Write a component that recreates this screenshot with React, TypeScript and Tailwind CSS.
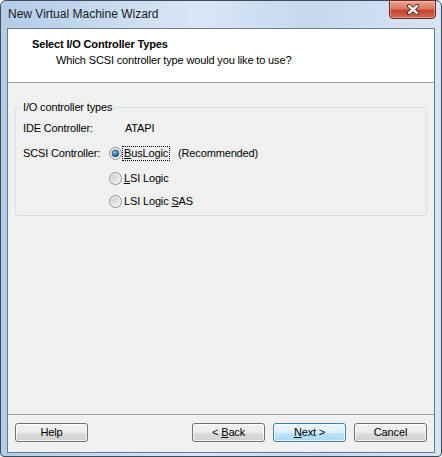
import type { ReactNode } from 'react';

function Radio({ checked }: { checked?: boolean }) {
  return (
    <svg width="13" height="13" viewBox="0 0 13 13" className="shrink-0" aria-hidden="true">
      <defs>
        <linearGradient id="radio-in" x1="0" y1="0" x2="1" y2="1">
          <stop offset="0" stopColor="#c9c9c9" />
          <stop offset="1" stopColor="#f7f7f7" />
        </linearGradient>
        <radialGradient id="radio-dot" cx="0.4" cy="0.35" r="0.7">
          <stop offset="0" stopColor="#9fd3f5" />
          <stop offset="0.45" stopColor="#3b88c4" />
          <stop offset="1" stopColor="#14476f" />
        </radialGradient>
      </defs>
      <circle cx="6.5" cy="6.5" r="6" fill="#f4f4f4" stroke="#8b8b8b" />
      <circle cx="6.5" cy="6.5" r="4.6" fill="url(#radio-in)" />
      {checked && <circle cx="6.5" cy="6.5" r="3.4" fill="url(#radio-dot)" stroke="#1d4f78" strokeWidth="0.6" />}
    </svg>
  );
}

function RadioOption({ checked, focused, children }: { checked?: boolean; focused?: boolean; children: ReactNode }) {
  return (
    <div className="flex items-center">
      <Radio checked={checked} />
      <span
        className={`px-[1px] leading-[13px] border ${focused ? 'border-dotted border-black' : 'border-transparent'}`}
      >
        {children}
      </span>
    </div>
  );
}

function Button({ children, primary }: { children: ReactNode; primary?: boolean }) {
  return (
    <button
      type="button"
      className={`flex h-[19px] w-[73px] items-center justify-center rounded-[3px] border text-[11px] leading-[13px] text-black shadow-[inset_0_0_0_1px_rgba(255,255,255,0.8)] ${
        primary
          ? 'border-[#3c7fb1] bg-[linear-gradient(#eaf6fd_0%,#d9f0fc_50%,#bee6fd_50%,#a7d9f5_100%)]'
          : 'border-[#707070] bg-[linear-gradient(#f2f2f2_0%,#ebebeb_50%,#dddddd_50%,#cfcfcf_100%)]'
      }`}
    >
      {children}
    </button>
  );
}

export default function App() {
  return (
    <div className="flex h-[457px] w-[442px] flex-col rounded-t-[6px] rounded-b-[4px] border border-[#3f4b57] bg-[linear-gradient(90deg,#b3cce8_0%,#c8dbf0_25%,#d9e7f6_45%,#c4d8ee_70%,#d6e5f5_100%)] font-['Liberation_Sans',Arial,sans-serif] text-black">
      <div className="flex h-[27px] shrink-0 items-start justify-between">
        <div className="pl-[7px] pt-[6px] text-[12px] leading-[15px] text-[#1b1b1b]">New Virtual Machine Wizard</div>
        <div className="mr-[5px] -mt-px flex h-[19px] w-[47px] items-center justify-center rounded-b-[4px] border border-[#6a2a1f] bg-[linear-gradient(#eaa698_0%,#d9785f_45%,#c4452c_55%,#d46a4f_100%)] shadow-[inset_0_0_0_1px_rgba(255,210,200,0.45)]">
          <svg width="14" height="11" viewBox="0 0 14 11" aria-hidden="true">
            <path d="M3 2 L11 9 M11 2 L3 9" stroke="#4a1e16" strokeWidth="4.2" strokeLinecap="round" />
            <path d="M3 2 L11 9 M11 2 L3 9" stroke="#ffffff" strokeWidth="2.4" strokeLinecap="round" />
          </svg>
        </div>
      </div>

      <div className="mx-[6px] mb-[3px] flex flex-1 flex-col border border-[#6b7a89] bg-[#f0f0f0] text-[11px] leading-[13px] tracking-[-0.15px]">
        <div className="h-[54px] shrink-0 border-b border-[#a0a0a0] bg-white">
          <div className="pl-[24px] pt-[9px] font-bold">Select I/O Controller Types</div>
          <div className="mt-[3px] pl-[48px]">Which SCSI controller type would you like to use?</div>
        </div>

        <div className="flex-1">
          <fieldset className="mx-[7px] mt-[18px] rounded-[3px] border border-[#d5dfe5] px-[7px] pt-[7px] pb-[6px]">
            <legend className="-ml-[1px] px-[1px] leading-[13px]">I/O controller types</legend>
            <div className="flex h-[15px] items-center">
              <span className="w-[86px]">IDE Controller:</span>
              <span className="pl-[16px]">ATAPI</span>
            </div>
            <div className="mt-[10px] flex h-[15px] items-center">
              <span className="w-[86px]">SCSI Controller:</span>
              <RadioOption checked focused>
                <span className="underline">B</span>usLogic
              </RadioOption>
              <span className="ml-[8px]">(Recommended)</span>
            </div>
            <div className="mt-[10px] flex h-[15px] items-center pl-[86px]">
              <RadioOption>
                <span className="underline">L</span>SI Logic
              </RadioOption>
            </div>
            <div className="mt-[8px] flex h-[15px] items-center pl-[86px]">
              <RadioOption>
                LSI Logic <span className="underline">S</span>AS
              </RadioOption>
            </div>
          </fieldset>
        </div>

        <div className="flex shrink-0 items-center border-t border-[#a0a0a0] px-[7px] pt-[8px] pb-[10px]">
          <Button>Help</Button>
          <div className="flex-1" />
          <Button>
            &lt; <span className="ml-[3px] underline">B</span>ack
          </Button>
          <div className="ml-[8px]">
            <Button primary>
              <span className="underline">N</span>ext &gt;
            </Button>
          </div>
          <div className="ml-[8px]">
            <Button>Cancel</Button>
          </div>
        </div>
      </div>
    </div>
  );
}
